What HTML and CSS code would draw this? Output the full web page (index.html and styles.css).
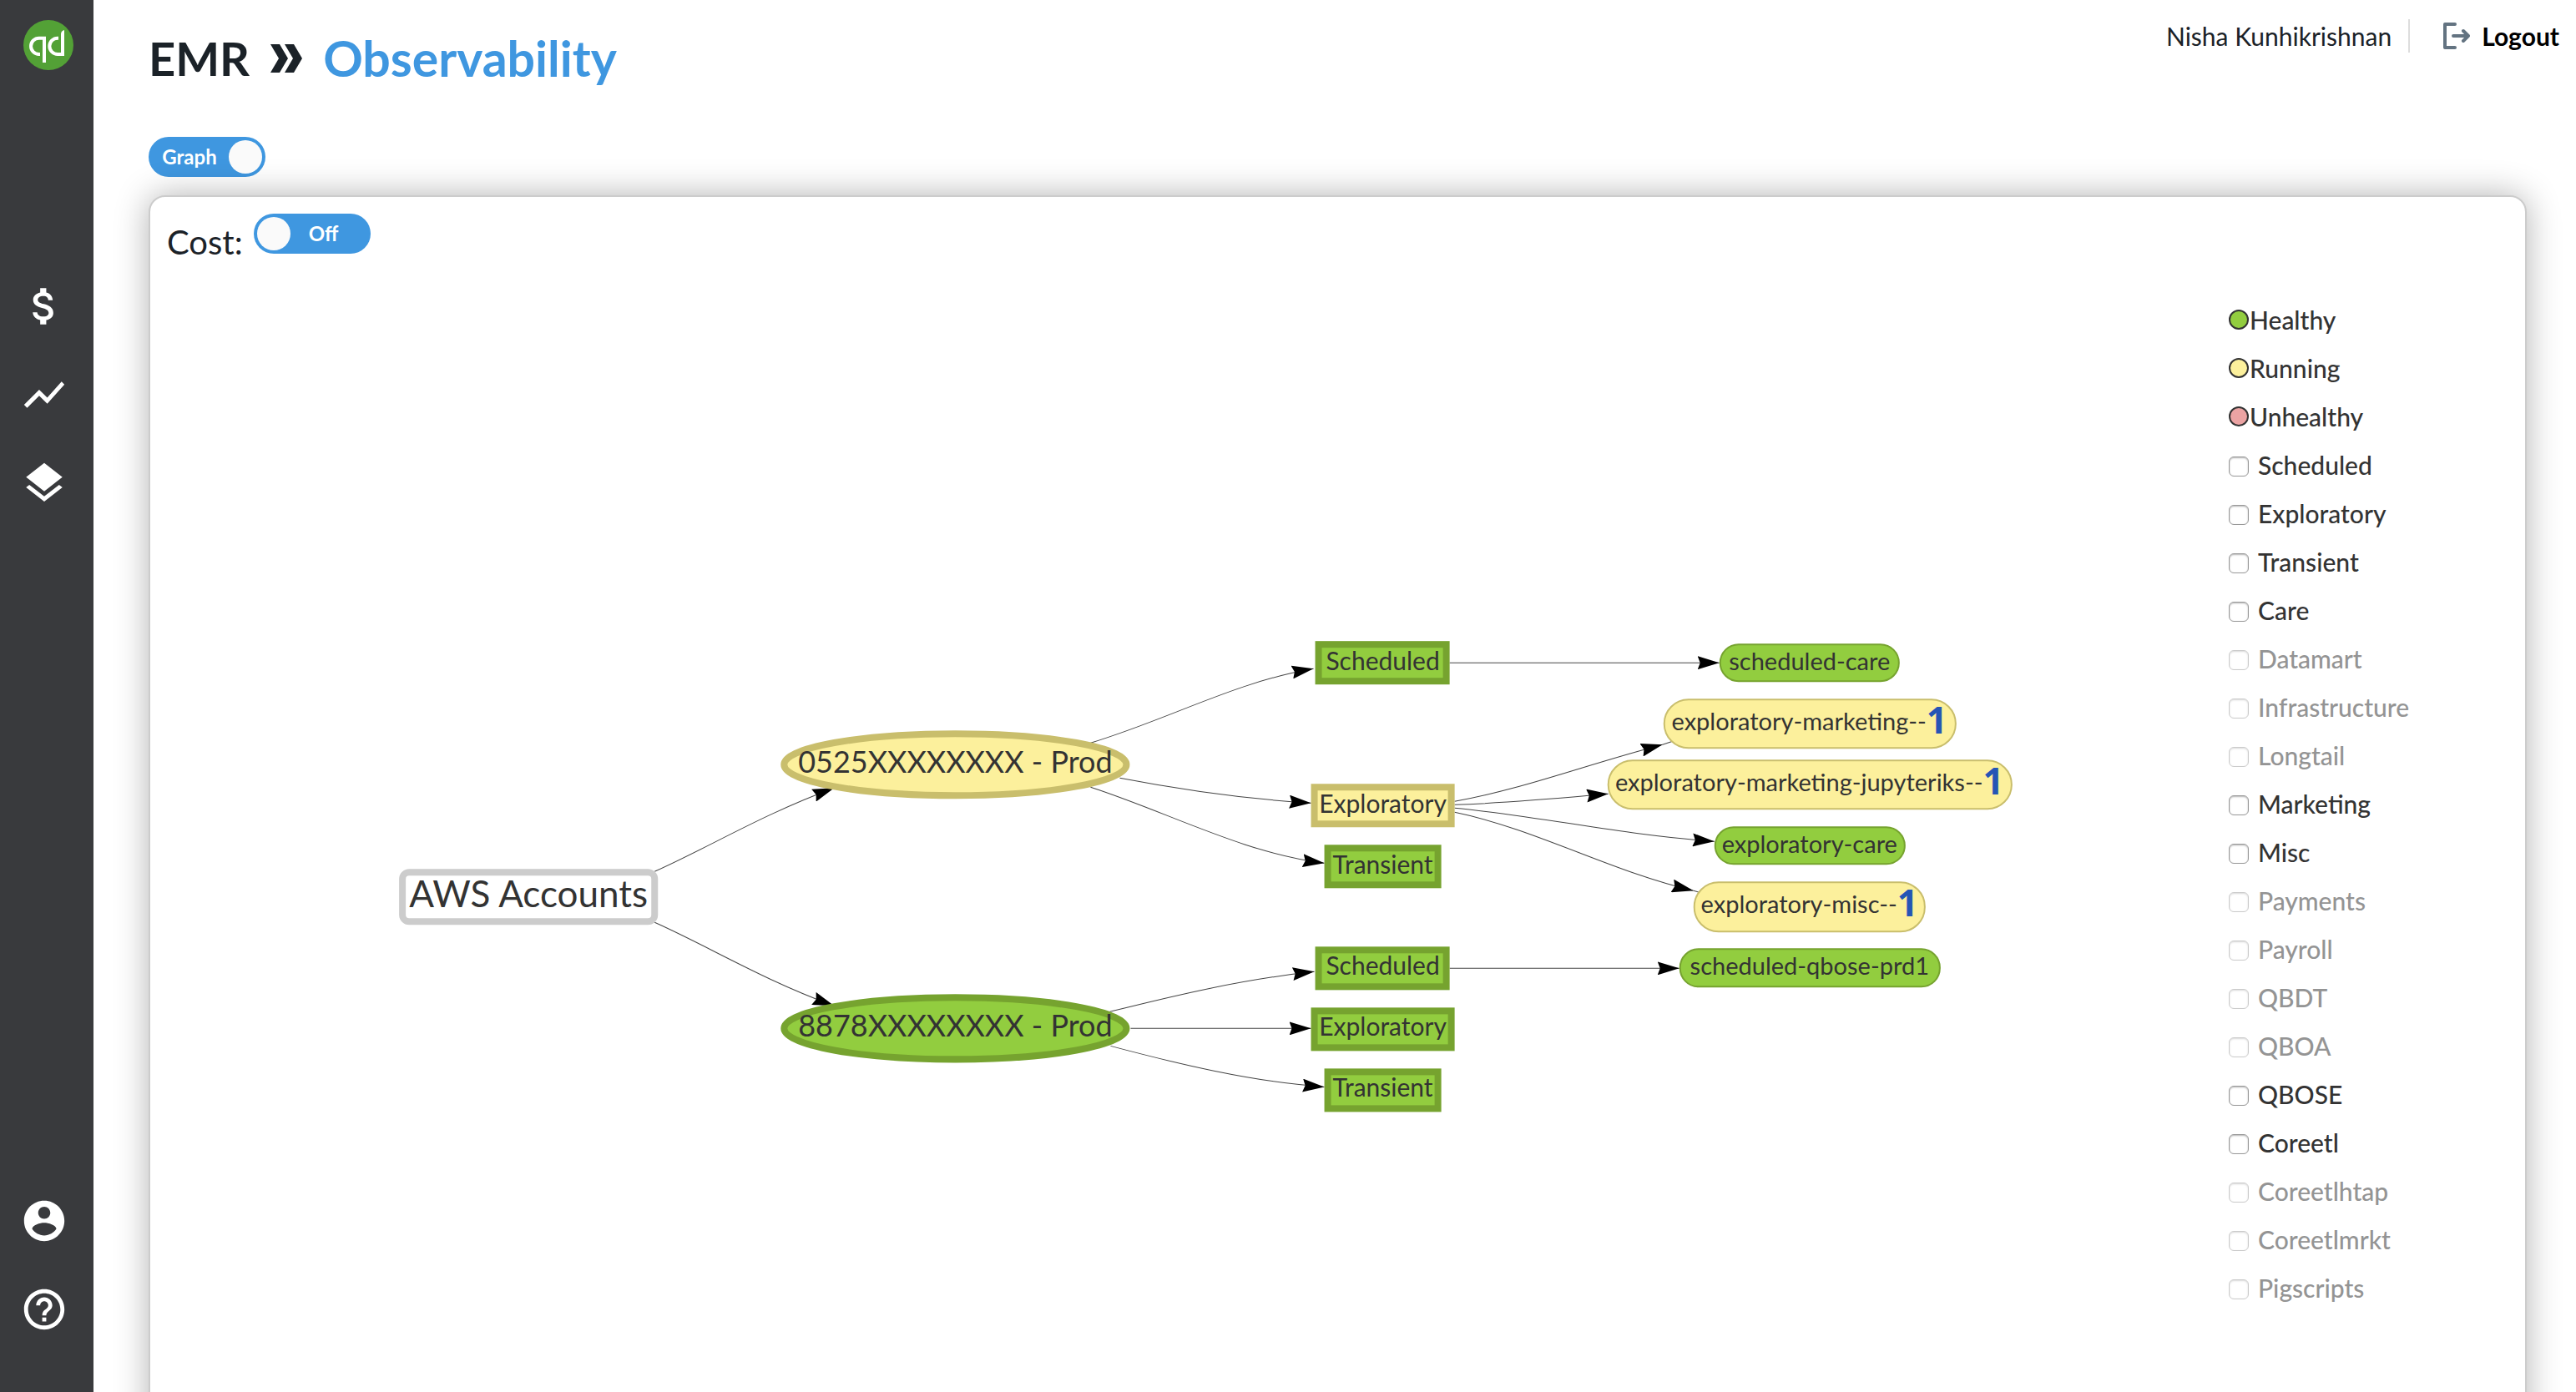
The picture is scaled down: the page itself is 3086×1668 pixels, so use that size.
FILE: index.html
```html
<!DOCTYPE html>
<html lang="en">
<head>
<meta charset="utf-8">
<title>EMR Observability</title>
<link rel="stylesheet" href="styles.css">
</head>
<body>
<div class="app">
  <nav class="sidebar" aria-label="Main">
    <a class="logo" href="#" aria-label="Home">
      <svg viewBox="0 0 60 60"><circle cx="30" cy="30" r="30" fill="#53a136"/><g fill="none" stroke="#fff" stroke-width="4"><path d="M20 41H18.700a9.650 9.650 0 0 1 0-19.300H25V51"/><path d="M42 21.700H41a9.650 9.650 0 0 0 0 19.300H47"/></g><path d="M45 43V17q0-4 4-5v31z" fill="#fff"/></svg>
    </a>
    <div class="nav-group">
      <a class="nav-link" href="#" aria-label="Cost"><svg viewBox="0 0 24 24"><path d="M11.800 10.900c-2.270-.59-3-1.200-3-2.150 0-1.090 1.010-1.850 2.700-1.850 1.780 0 2.440.85 2.500 2.100h2.210c-.07-1.720-1.120-3.300-3.210-3.810V3h-3v2.160c-1.940.42-3.500 1.680-3.500 3.610 0 2.310 1.910 3.460 4.700 4.130 2.500.6 3 1.480 3 2.410 0 .69-.49 1.790-2.700 1.790-2.060 0-2.870-.92-2.980-2.100h-2.200c.12 2.190 1.760 3.420 3.680 3.830V21h3v-2.150c1.950-.37 3.500-1.500 3.500-3.550 0-2.840-2.430-3.810-4.700-4.400z"/></svg></a>
      <a class="nav-link" href="#" aria-label="Trends"><svg viewBox="0 0 24 24"><path d="M3.500 18.490l6-6.010 4 4L22 6.920l-1.410-1.410-7.090 7.970-4-4L2 16.990z"/></svg></a>
      <a class="nav-link" href="#" aria-label="Layers"><svg viewBox="0 0 24 24"><path d="M11.990 18.540l-7.370-5.730L3 14.070l9 7 9-7-1.630-1.270-7.380 5.740zM12 16l7.360-5.730L21 9l-9-7-9 7 1.630 1.270L12 16z"/></svg></a>
    </div>
    <div class="nav-group nav-bottom">
      <a class="nav-link" href="#" aria-label="Account"><svg viewBox="0 0 24 24"><path d="M12 2C6.480 2 2 6.480 2 12s4.480 10 10 10 10-4.480 10-10S17.520 2 12 2zm0 3c1.660 0 3 1.340 3 3s-1.340 3-3 3-3-1.340-3-3 1.340-3 3-3zm0 14.200c-2.500 0-4.710-1.280-6-3.220.03-1.990 4-3.080 6-3.080 1.990 0 5.970 1.090 6 3.080-1.290 1.940-3.500 3.220-6 3.220z"/></svg></a>
      <a class="nav-link" href="#" aria-label="Help"><svg viewBox="0 0 24 24"><path d="M11 18h2v-2h-2v2zm1-16C6.480 2 2 6.480 2 12s4.480 10 10 10 10-4.480 10-10S17.520 2 12 2zm0 18c-4.410 0-8-3.590-8-8s3.590-8 8-8 8 3.590 8 8-3.590 8-8 8zm0-14c-2.210 0-4 1.790-4 4h2c0-1.100.9-2 2-2s2 .9 2 2c0 2-3 1.750-3 5h2c0-2.250 3-2.500 3-5 0-2.210-1.790-4-4-4z"/></svg></a>
    </div>
  </nav>

  <main class="main">
    <header class="header">
      <h1 class="title">
        <span>EMR</span>
        <svg class="chevrons" viewBox="0 0 40 34" aria-hidden="true"><path d="M1 0h11l10 17-10 17H1l10-17zM18 0h11l10 17-10 17H18l10-17z"/></svg>
        <span class="title-page">Observability</span>
      </h1>
      <div class="user">
        <span class="user-name">Nisha Kunhikrishnan</span>
        <button class="logout" type="button">
          <svg viewBox="0 0 32 32" aria-hidden="true"><path d="M14 2H2v28h12M12 16h18M24 10l6 6-6 6" fill="none" stroke="#637381" stroke-width="4" stroke-linecap="round" stroke-linejoin="round"/></svg>
          Logout
        </button>
      </div>
    </header>

    <label class="switch view-switch"><input type="checkbox" role="switch" checked><span>Graph</span></label>

    <section class="panel">
      <label class="cost"><span class="cost-label">Cost:</span><span class="switch"><input type="checkbox" role="switch"><span>Off</span></span></label>
      <div class="content">
        <svg class="graph" viewBox="181 320 2489 1348">
          <defs>
            <marker id="arrow" viewBox="0 0 26 16" refX="26" refY="8" markerWidth="26" markerHeight="16" markerUnits="userSpaceOnUse" orient="auto"><path d="M0 0L26 8L0 16L3 8z"/></marker>
          </defs>
          <g class="edges">
            <path d="M785 1044C850 1015 915 975 1000 944"/>
            <path d="M785 1105C850 1134 915 1174 1000 1205"/>
            <path d="M1307 890C1400 862 1480 817 1574 801"/>
            <path d="M1342 932C1420 947 1490 957 1571 962"/>
            <path d="M1307 943C1400 973 1490 1022 1587 1034"/>
            <path d="M1737 794H2060"/>
            <path d="M1743 960C1830 944 1900 916 1992 892"/>
            <path d="M1992 892L2004 888" class="stub"/>
            <path d="M1743 964C1810 962 1860 957 1927 951"/>
            <path d="M1743 968C1850 978 1940 1000 2054 1008"/>
            <path d="M1743 973C1840 993 1930 1044 2029 1067"/>
            <path d="M2029 1067L2036 1069" class="stub"/>
            <path d="M1330 1212C1410 1192 1490 1173 1575 1164"/>
            <path d="M1355 1232H1571"/>
            <path d="M1331 1253C1410 1274 1500 1296 1587 1302"/>
            <path d="M1737 1160H2012"/>
          </g>
          <rect class="root" x="483" y="1045" width="302" height="59" rx="8"/>
          <text class="t-root" x="634" y="1087">AWS Accounts</text>
          <g class="running account"><ellipse cx="1145" cy="916" rx="205" ry="37"/><text x="1145" y="926">0525XXXXXXXX - Prod</text></g>
          <g class="healthy account"><ellipse cx="1145" cy="1232" rx="205" ry="37"/><text x="1145" y="1242">8878XXXXXXXX - Prod</text></g>
          <g class="healthy kind"><rect x="1580" y="772" width="153" height="44"/><text x="1657" y="803">Scheduled</text></g>
          <g class="running kind"><rect x="1575" y="943" width="164" height="44"/><text x="1657" y="974">Exploratory</text></g>
          <g class="healthy kind"><rect x="1591" y="1016" width="132" height="44"/><text x="1657" y="1047">Transient</text></g>
          <g class="healthy kind"><rect x="1580" y="1138" width="153" height="44"/><text x="1657" y="1168">Scheduled</text></g>
          <g class="healthy kind"><rect x="1575" y="1211" width="164" height="44"/><text x="1657" y="1241">Exploratory</text></g>
          <g class="healthy kind"><rect x="1591" y="1284" width="132" height="44"/><text x="1657" y="1314">Transient</text></g>
          <g class="healthy leaf"><rect x="2061" y="772" width="214" height="44" rx="22"/><text x="2168" y="803">scheduled-care</text></g>
          <g class="running leaf"><rect x="1994" y="838" width="349" height="58" rx="29"/><text x="2168" y="875">exploratory-marketing--<tspan class="count" dy="4">1</tspan></text></g>
          <g class="running leaf"><rect x="1927" y="911" width="483" height="58" rx="29"/><text x="2168" y="948">exploratory-marketing-jupyteriks--<tspan class="count" dy="4">1</tspan></text></g>
          <g class="healthy leaf"><rect x="2055" y="991" width="227" height="44" rx="22"/><text x="2168" y="1022">exploratory-care</text></g>
          <g class="running leaf"><rect x="2030" y="1057" width="276" height="59" rx="29"/><text x="2168" y="1094">exploratory-misc--<tspan class="count" dy="4">1</tspan></text></g>
          <g class="healthy leaf"><rect x="2013" y="1137" width="311" height="45" rx="22"/><text x="2168" y="1168">scheduled-qbose-prd1</text></g>
        </svg>
        <ul class="legend">
          <li class="status"><i class="dot dot-healthy"></i>Healthy</li>
          <li class="status"><i class="dot dot-running"></i>Running</li>
          <li class="status"><i class="dot dot-unhealthy"></i>Unhealthy</li>
          <li><label><input type="checkbox">Scheduled</label></li>
          <li><label><input type="checkbox">Exploratory</label></li>
          <li><label><input type="checkbox">Transient</label></li>
          <li><label><input type="checkbox">Care</label></li>
          <li><label><input type="checkbox" disabled>Datamart</label></li>
          <li><label><input type="checkbox" disabled>Infrastructure</label></li>
          <li><label><input type="checkbox" disabled>Longtail</label></li>
          <li><label><input type="checkbox">Marketing</label></li>
          <li><label><input type="checkbox">Misc</label></li>
          <li><label><input type="checkbox" disabled>Payments</label></li>
          <li><label><input type="checkbox" disabled>Payroll</label></li>
          <li><label><input type="checkbox" disabled>QBDT</label></li>
          <li><label><input type="checkbox" disabled>QBOA</label></li>
          <li><label><input type="checkbox">QBOSE</label></li>
          <li><label><input type="checkbox">Coreetl</label></li>
          <li><label><input type="checkbox" disabled>Coreetlhtap</label></li>
          <li><label><input type="checkbox" disabled>Coreetlmrkt</label></li>
          <li><label><input type="checkbox" disabled>Pigscripts</label></li>
        </ul>
      </div>
    </section>
  </main>
</div>
</body>
</html>
```
FILE: styles.css
```css
* { box-sizing: border-box; }

body {
  margin: 0;
  background: #fff;
  color: #1b2228;
  font-family: Lato, "Liberation Sans", sans-serif;
  font-size: 30px;
}

.app {
  display: flex;
  height: 100vh;
  overflow: hidden;
}

/* Sidebar */
.sidebar {
  flex: none;
  display: flex;
  flex-direction: column;
  width: 112px;
  padding: 24px 0 70px 24px;
  background: #393a3d;
}

.logo {
  width: 60px;
  height: 60px;
  margin-left: 4px;
}

.logo svg { display: block; }

.nav-group {
  display: flex;
  flex-direction: column;
  gap: 48px;
  margin-top: 254px;
}

.nav-bottom { margin-top: auto; }

.nav-link {
  width: 58px;
  height: 58px;
}

.nav-link svg {
  display: block;
  fill: #fff;
}

/* Header */
.main {
  flex: 1;
  min-width: 0;
  padding: 20px 59px 0 66px;
}

.header {
  display: flex;
  justify-content: space-between;
  align-items: flex-start;
  height: 144px;
  margin-right: -41px;
}

.title {
  display: flex;
  align-items: center;
  gap: 24px;
  margin: 14px 0 0;
  font-size: 56px;
  line-height: 72px;
  font-weight: 700;
}

.chevrons {
  width: 40px;
  height: 34px;
  fill: #1b2228;
}

.title-page {
  color: #3f97e0;
  font-size: 59px;
}

.user {
  display: flex;
  align-items: center;
  margin-top: 3px;
}

.user-name {
  padding-right: 20px;
  border-right: 2px solid #ddd;
  line-height: 40px;
}

.logout {
  display: flex;
  align-items: center;
  gap: 14px;
  padding: 0 2px 0 40px;
  border: 0;
  background: none;
  color: #000;
  font: 700 30px/40px Lato, "Liberation Sans", sans-serif;
}

.logout svg {
  width: 32px;
  height: 32px;
}

/* Toggle switches */
.switch {
  display: flex;
  width: 140px;
  height: 48px;
  border-radius: 24px;
  background: #3f97e0;
  color: #fff;
  font-size: 24px;
  line-height: 48px;
  font-weight: 700;
}

.switch input {
  appearance: none;
  width: 40px;
  height: 40px;
  margin: 4px;
  border-radius: 50%;
  background: #fafafa;
}

.switch span {
  flex: 1;
  padding-right: 20px;
  text-align: center;
}

.view-switch input { order: 2; }

.view-switch span { padding: 0 0 0 6px; }

/* Panel */
.panel {
  margin-top: 22px;
  padding-bottom: 60px;
  border: 2px solid #ccc;
  border-radius: 20px;
  background: #fff;
  box-shadow: 0 0 40px rgba(0, 0, 0, .3);
}

.cost {
  display: flex;
  align-items: flex-start;
  gap: 13px;
  width: max-content;
  height: 84px;
  padding: 20px 0 0 20px;
}

.cost-label {
  padding-top: 10px;
  font-size: 40px;
  line-height: 48px;
}

.content {
  display: flex;
  align-items: flex-start;
}

.legend {
  flex: none;
  width: 355px;
  margin: 34px 0 0;
  padding: 0;
  list-style: none;
  color: #333;
  font-weight: 500;
}

.legend li,
.legend label {
  display: flex;
  align-items: center;
  height: 58px;
}

.legend label { gap: 11px; }

.legend .status { gap: 1px; }

.dot {
  width: 24px;
  height: 24px;
  border: 2px solid #333;
  border-radius: 50%;
}

.dot-healthy { background: #92cd3f; }
.dot-running { background: #fcf09c; }
.dot-unhealthy { background: #eba3a3; }

.legend input {
  appearance: none;
  width: 24px;
  height: 24px;
  margin: 4px 0 0;
  border: 1px solid #999;
  border-radius: 6px;
  background: #fff;
  box-shadow: inset 0 1px 2px rgba(0, 0, 0, .3);
}

.legend input:disabled { opacity: .5; }

.legend label:has(:disabled) { color: #949494; }

/* Graph */
.graph {
  flex: 1;
  min-width: 0;
}

.graph text {
  fill: #333;
  text-anchor: middle;
}

.edges path {
  fill: none;
  stroke: #444;
  stroke-width: 1px;
  marker-end: url(#arrow);
}

.edges .stub { marker-end: none; }

#arrow path {
  fill: #000;
  stroke: none;
}

.root {
  fill: #fff;
  stroke: #ccc;
  stroke-width: 8px;
}

.graph .t-root { font-size: 44px; }

.running { fill: #fcf09c; stroke: #c9be6c; }
.healthy { fill: #92cd3f; stroke: #76a32f; }
.account, .kind { stroke-width: 8px; }
.leaf { stroke-width: 2px; }
.graph g text { stroke: none; }
.account text { font-size: 36px; }
.kind text { font-size: 30px; }
.leaf text { font-size: 29px; }

.graph .count {
  fill: #2555b5;
  font-family: "Open Sans", "Noto Sans", sans-serif;
  font-size: 44px;
  font-weight: 700;
}
```
